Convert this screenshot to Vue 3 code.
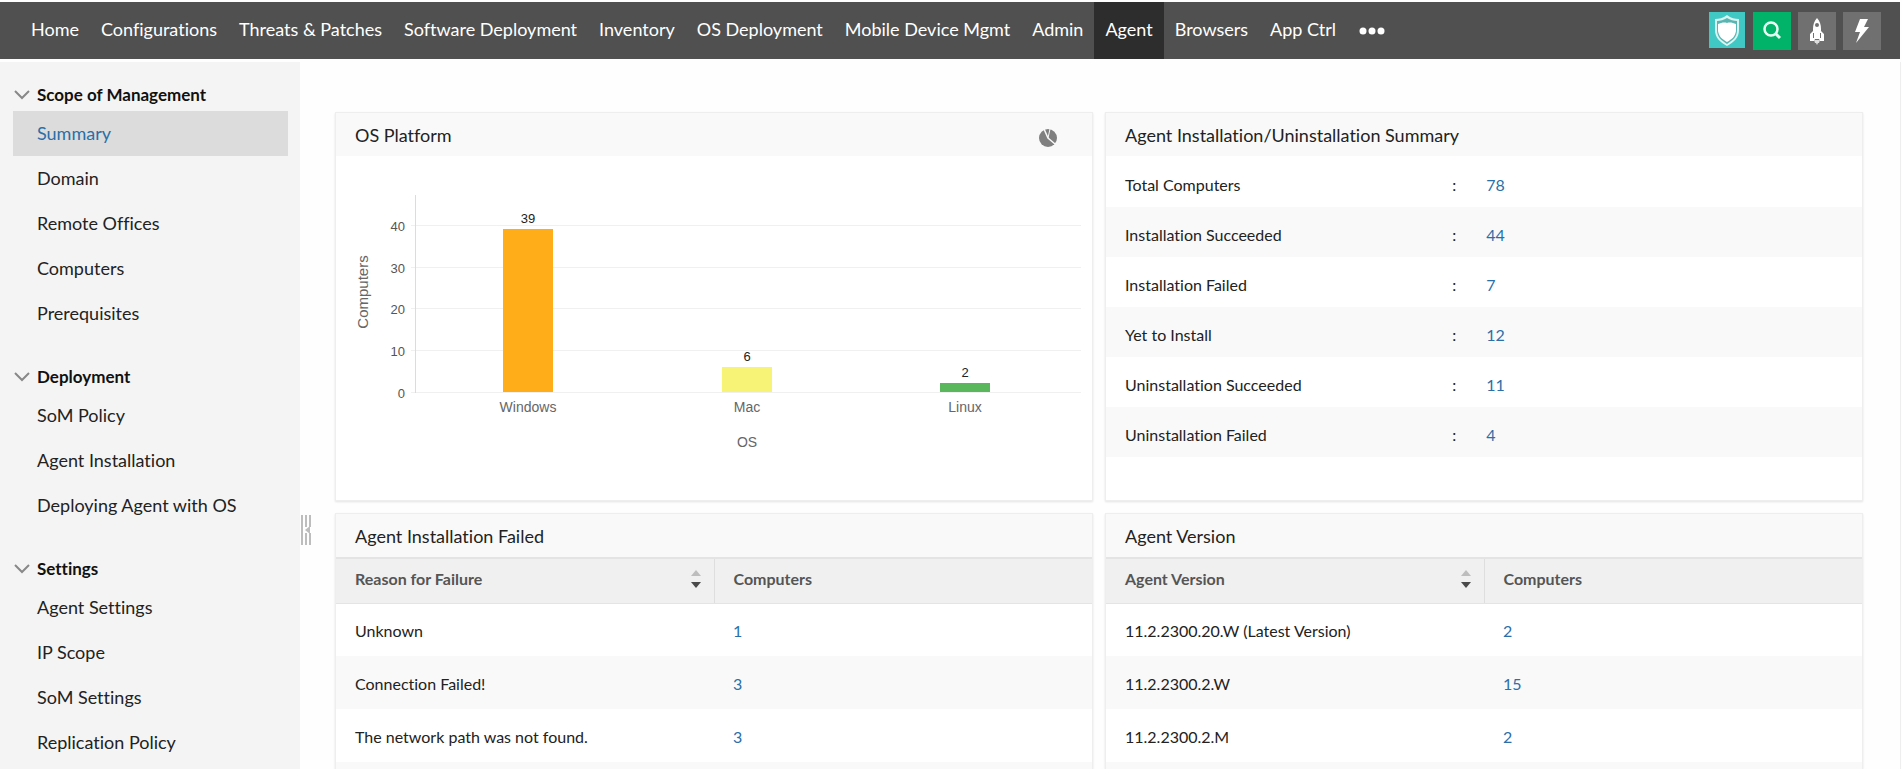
<script setup>
import { ref } from 'vue'

const nav = ['Home', 'Configurations', 'Threats & Patches', 'Software Deployment', 'Inventory', 'OS Deployment', 'Mobile Device Mgmt', 'Admin', 'Agent', 'Browsers', 'App Ctrl']
const activeNav = ref('Agent')

const sections = [
  { title: 'Scope of Management', items: ['Summary', 'Domain', 'Remote Offices', 'Computers', 'Prerequisites'] },
  { title: 'Deployment', items: ['SoM Policy', 'Agent Installation', 'Deploying Agent with OS'] },
  { title: 'Settings', items: ['Agent Settings', 'IP Scope', 'SoM Settings', 'Replication Policy'] }
]
const activeItem = ref('Summary')

const baseline = 236
const ticks = [0, 10, 20, 30, 40].map((value, i) => ({ value, y: baseline - [0, 42, 84, 125, 167][i] }))
const bars = [
  { name: 'Windows', value: 39, x: 192, h: 163, color: '#ffad18' },
  { name: 'Mac', value: 6, x: 411, h: 25, color: '#f6f376' },
  { name: 'Linux', value: 2, x: 629, h: 9, color: '#5ab75c' }
]

const summary = [
  ['Total Computers', 78],
  ['Installation Succeeded', 44],
  ['Installation Failed', 7],
  ['Yet to Install', 12],
  ['Uninstallation Succeeded', 11],
  ['Uninstallation Failed', 4]
]

const tables = [
  {
    title: 'Agent Installation Failed',
    column: 'Reason for Failure',
    rows: [['Unknown', 1], ['Connection Failed!', 3], ['The network path was not found.', 3]]
  },
  {
    title: 'Agent Version',
    column: 'Agent Version',
    rows: [['11.2.2300.20.W (Latest Version)', 2], ['11.2.2300.2.W', 15], ['11.2.2300.2.M', 2]]
  }
]
</script>

<template>
  <div class="page">
    <header class="topbar">
      <nav class="nav">
        <a v-for="n in nav" :key="n" href="#" :class="{ active: n === activeNav }" @click.prevent="activeNav = n">{{ n }}</a>
        <button class="more" aria-label="More">
          <svg width="26" height="8" viewBox="0 0 26 8"><circle cx="4" cy="4" r="3.500" /><circle cx="13" cy="4" r="3.500" /><circle cx="22" cy="4" r="3.500" /></svg>
        </button>
      </nav>
      <div class="tools">
        <button class="tool shield" aria-label="Security">
          <svg width="36" height="36" viewBox="0 0 36 36">
            <path d="M18 3 C22 6 26 7 30 7 V18 C30 26 25 30 18 34 C11 30 6 26 6 18 V7 C10 7 14 6 18 3Z" fill="#d8f4f2" />
            <path d="M18 6 C21 8 25 9 28 9 V18 C28 25 24 28 18 32 C12 28 8 25 8 18 V9 C11 9 15 8 18 6Z" fill="#59b5b2" />
            <path d="M18 11 C21 10 24 11 27 12 V19 C26 25 23 27 18 30 C13 27 10 25 9 19 V12 C12 11 15 10 18 11Z" fill="#fff" />
          </svg>
        </button>
        <button class="tool search" aria-label="Search">
          <svg width="38" height="38" viewBox="0 0 38 38" fill="none" stroke="#e6fff3" stroke-width="2.500"><circle cx="18" cy="17" r="6.500" /><path d="M22.500 21.500 L27 26" stroke-width="3" /></svg>
        </button>
        <button class="tool" aria-label="Quick launch">
          <svg width="38" height="38" viewBox="0 0 38 38" fill="#fff">
            <path fill-rule="evenodd" d="M19 6 C22 9 23 13 23 17 V19 L26 22 V29 H22 L21 27 H17 L16 29 H12 V22 L15 19 V17 C15 13 16 9 19 6Z M19 11 A2 2 0 1 0 19 15 A2 2 0 1 0 19 11Z M15 21 V26 H16 V21Z M22 21 V26 H23 V21Z" />
            <path d="M16 28 H22 L21 31 H20 L19 33 L18 31 H17Z" fill="#ddd" />
          </svg>
        </button>
        <button class="tool" aria-label="Actions">
          <svg width="38" height="38" viewBox="0 0 38 38" fill="#fff"><path d="M17 7 H25 L21 15 H26 L13 31 L17 20 H12Z" /></svg>
        </button>
      </div>
    </header>

    <div class="body">
      <aside class="sidebar">
        <section v-for="s in sections" :key="s.title" class="group">
          <h2>
            <svg width="16" height="10" viewBox="0 0 16 10" fill="none" stroke="#888" stroke-width="2"><path d="M1 1 L8 8 L15 1" /></svg>
            {{ s.title }}
          </h2>
          <a v-for="i in s.items" :key="i" href="#" :class="{ active: i === activeItem }" @click.prevent="activeItem = i">{{ i }}</a>
        </section>
      </aside>

      <div class="splitter">
        <svg width="10" height="30" viewBox="0 0 10 30" fill="none" stroke="#bdbdbd" stroke-width="2"><path d="M1 0V30M5 0V12M9 0V12M5 18V30M9 18V30" /><path d="M9 11L4 15L9 19Z" fill="#bdbdbd" stroke="none" /></svg>
      </div>

      <main class="cards">
        <section class="card tall">
          <div class="card-head">
            <h3>OS Platform</h3>
            <button class="pie" aria-label="Change chart type">
              <svg width="18" height="18" viewBox="0 0 18 18">
                <circle cx="9" cy="9" r="9" fill="#808080" />
                <path d="M5 0 L9 9 L16 15" fill="none" stroke="#f9f9f9" stroke-width="1.500" /><path d="M9 9 L11 0" stroke="#f9f9f9" />
              </svg>
            </button>
          </div>
          <svg class="chart" viewBox="0 0 756 343" role="img" aria-label="Computers by OS">
            <g v-for="t in ticks" :key="t.value">
              <rect x="75" :y="t.y" width="670" height="1" fill="#f0f0f0" />
              <text class="tick" x="69" :y="t.y + 6" text-anchor="end">{{ t.value }}</text>
            </g>
            <rect x="79" y="39" width="1" height="198" fill="#dcdcdc" />
            <g v-for="b in bars" :key="b.name">
              <rect :x="b.x - 25" :y="baseline - b.h" width="50" :height="b.h" :fill="b.color" />
              <text class="value" :x="b.x" :y="baseline - b.h - 6" text-anchor="middle">{{ b.value }}</text>
              <text class="name" :x="b.x" y="256" text-anchor="middle">{{ b.name }}</text>
            </g>
            <text class="axis" x="411" y="291" text-anchor="middle">OS</text>
            <text class="axis vertical" x="-136" y="32" text-anchor="middle" transform="rotate(-90)">Computers</text>
          </svg>
        </section>

        <section class="card tall">
          <div class="card-head"><h3>Agent Installation/Uninstallation Summary</h3></div>
          <table class="summary">
            <tbody>
              <tr v-for="r in summary" :key="r[0]">
                <th scope="row">{{ r[0] }}</th>
                <td class="colon">:</td>
                <td><a href="#" @click.prevent>{{ r[1] }}</a></td>
              </tr>
            </tbody>
          </table>
        </section>

        <section v-for="t in tables" :key="t.title" class="card">
          <div class="card-head"><h3>{{ t.title }}</h3></div>
          <table class="list">
            <thead>
              <tr>
                <th scope="col">
                  <div class="sort-head">
                    {{ t.column }}
                    <button aria-label="Sort"><svg width="12" height="18" viewBox="0 0 12 18"><path d="M6 0 L11 6 H1Z" fill="#bdbdbd" /><path d="M6 18 L11 12 H1Z" fill="#4a4a4a" /></svg></button>
                  </div>
                </th>
                <th scope="col">Computers</th>
              </tr>
            </thead>
            <tbody>
              <tr v-for="r in t.rows" :key="r[0]">
                <td>{{ r[0] }}</td>
                <td><a href="#" @click.prevent>{{ r[1] }}</a></td>
              </tr>
              <tr><td colspan="2"></td></tr>
            </tbody>
          </table>
        </section>
      </main>
    </div>
  </div>
</template>

<style>
body { background: #fefefe; }
#app { height: 100vh; }
</style>

<style scoped>
* { box-sizing: border-box; }
.page { height: 100%; display: flex; flex-direction: column; overflow: hidden; font-family: Lato, "Liberation Sans", sans-serif; font-variant-ligatures: none; color: #222; }
a { text-decoration: none; color: inherit; }
h2, h3 { margin: 0; }
button { border: 0; padding: 0; background: none; cursor: pointer; }
svg { display: block; }
.topbar { flex: none; height: 57px; margin: 2px 2px 0 0; padding: 0 19px 0 20px; background: #505050; display: flex; justify-content: space-between; align-items: stretch; }
.nav { display: flex; white-space: nowrap; }
.nav a { padding: 0 11px; line-height: 54px; font-size: 18px; color: #fff; }
.nav a.active { background: #2d2d2d; }
.more { padding: 0 12px; fill: #fff; }
.tools { display: flex; gap: 7px; padding-top: 10px; }
.tool { width: 38px; height: 38px; background: #707070; }
.shield { width: 36px; height: 36px; margin-right: 1px; background: #40c8c4; }
.search { background: #00b368; }
.body { flex: 1; min-height: 0; display: flex; margin: 3px 1px 0 0; border-right: 1px solid #eee; }
.sidebar { flex: none; width: 300px; padding: 16px 12px 0 13px; background: #f4f4f4; overflow: hidden; }
.group { margin-bottom: 24px; }
.group h2 { display: flex; align-items: center; gap: 7px; height: 33px; padding-left: 1px; font-size: 17px; font-weight: 700; color: #111; }
.group a { display: block; height: 45px; line-height: 45px; padding-left: 24px; font-size: 18px; }
.group a.active { background: #dcdcdc; color: #2a6fa8; }
.splitter { flex: none; width: 35px; padding: 453px 0 0 1px; }
.cards { flex: 1; display: grid; grid-template-columns: 1fr 1fr; gap: 12px; align-content: start; padding: 50px 37px 0 0; }
.card { min-width: 0; background: #fff; border: 1px solid #eee; box-shadow: 0 1px 2px #e4e4e4; }
.tall { min-height: 389px; }
.card-head { display: flex; align-items: center; justify-content: space-between; height: 43px; padding: 0 35px 0 19px; background: #f9f9f9; }
.card-head h3 { font-size: 18px; font-weight: 400; }
.pie { padding-top: 6px; }
.chart { width: 100%; height: auto; font-family: "Liberation Sans", Arial, sans-serif; }
.tick { font-size: 13px; fill: #555; }
.value { font-size: 13px; fill: #222; }
.name { font-size: 14px; fill: #666; }
.axis { font-size: 14px; fill: #666; }
.vertical { font-size: 15px; }
table { width: 100%; border-collapse: collapse; table-layout: fixed; font-size: 16px; text-align: left; }
tbody tr:nth-child(even) { background: #f9f9f9; }
th, td { padding: 0 0 0 19px; }
td a { color: #2a6fa8; }
.summary { margin-top: 1px; }
.summary th { font-weight: 400; width: 45%; }
.summary td, .summary th { height: 50px; padding-top: 4px; }
.summary .colon { width: 40px; padding-left: 6px; }
.summary td { padding-left: 0; }
.list th { height: 45px; padding-bottom: 4px; background: #f0f0f0; border-top: 2px solid #e4e4e4; border-bottom: 1px solid #e4e4e4; color: #555; font-weight: 700; }
.list th:first-child { border-right: 1px solid #dedede; }
.list td { height: 53px; padding-top: 2px; }
.sort-head { display: flex; align-items: center; justify-content: space-between; padding-right: 12px; }
</style>
